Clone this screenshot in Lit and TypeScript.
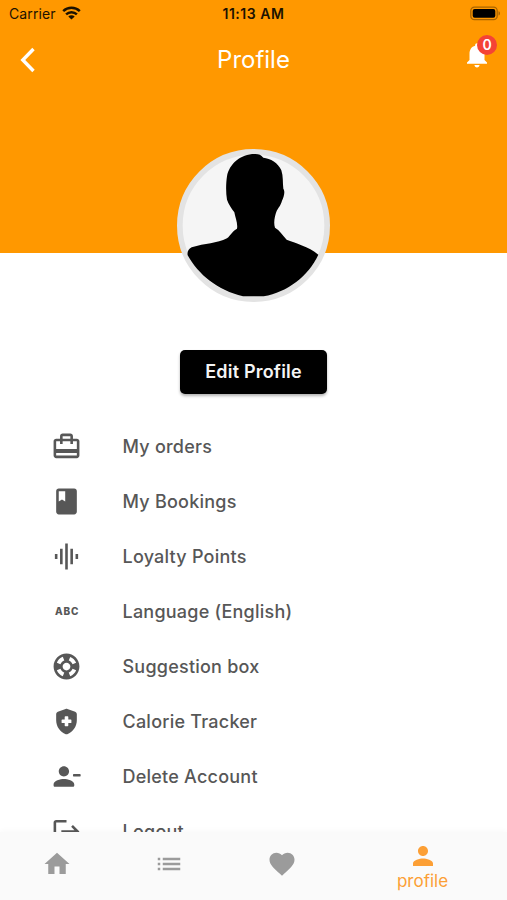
import { LitElement, html, css, svg } from "lit";
import { customElement, property } from "lit/decorators.js";

const ICONS: Record<string, string> = {
  orders:
    "M20 6h-3V4c0-1.11-.89-2-2-2H9c-1.11 0-2 .89-2 2v2H4c-1.11 0-2 .89-2 2v11c0 1.11.89 2 2 2h16c1.11 0 2-.89 2-2V8c0-1.11-.89-2-2-2zM9 4h6v2H9V4zm11 15H4v-2h16v2zm0-5H4V8h3v2h2V8h6v2h2V8h3v6z",
  bookings:
    "M18 2H6c-1.1 0-2 .9-2 2v16c0 1.1.9 2 2 2h12c1.1 0 2-.9 2-2V4c0-1.1-.9-2-2-2zM6 4h5v8l-2.5-1.5L6 12V4z",
  points:
    "M7 18h2V6H7v12zm4 4h2V2h-2v20zm-8-8h2v-4H3v4zm12 4h2V6h-2v12zm4-8v4h2v-4h-2z",
  support:
    "M12 2C6.48 2 2 6.48 2 12s4.48 10 10 10 10-4.48 10-10S17.52 2 12 2zm7.46 7.12l-2.78 1.15c-.51-1.36-1.58-2.44-2.95-2.94l1.15-2.78c2.1.8 3.77 2.47 4.58 4.57zM12 15c-1.66 0-3-1.34-3-3s1.34-3 3-3 3 1.34 3 3-1.34 3-3 3zM9.13 4.54l1.17 2.78c-1.38.5-2.47 1.59-2.98 2.97L4.54 9.13c.81-2.11 2.48-3.78 4.59-4.59zM4.54 14.87l2.78-1.15c.51 1.38 1.59 2.46 2.97 2.96l-1.17 2.78c-2.1-.81-3.77-2.48-4.58-4.59zm10.34 4.59l-1.15-2.78c1.37-.51 2.45-1.59 2.95-2.97l2.78 1.17c-.81 2.1-2.48 3.77-4.58 4.58z",
  health:
    "M11.3 2.26l-6 2.25C4.52 4.81 4 5.55 4 6.39v4.7c0 4.83 3.13 9.37 7.43 10.75.37.12.77.12 1.14 0 4.3-1.38 7.43-5.91 7.43-10.75v-4.7c0-.83-.52-1.58-1.3-1.87l-6-2.25c-.45-.18-.95-.18-1.4-.01zM15.3 13.2h-1.9v1.9c0 .3-.2.5-.5.5h-1.8c-.3 0-.5-.2-.5-.5v-1.9H8.7c-.3 0-.5-.2-.5-.5v-1.8c0-.3.2-.5.5-.5h1.9V8.5c0-.3.2-.5.5-.5h1.8c.3 0 .5.2.5.5v1.9h1.9c.3 0 .5.2.5.5v1.8c0 .3-.2.5-.5.5z",
  remove:
    "M14 8c0-2.21-1.79-4-4-4S6 5.79 6 8s1.79 4 4 4 4-1.79 4-4zM2 18v1c0 .55.45 1 1 1h14c.55 0 1-.45 1-1v-1c0-2.66-5.33-4-8-4s-8 1.34-8 4zM17.6 10h4.8c.35 0 .6.45.6 1s-.25 1-.6 1h-4.8c-.35 0-.6-.45-.6-1s.25-1 .6-1z",
  logout:
    "M17 7l-1.41 1.41L18.17 11H8v2h10.17l-2.58 2.58L17 17l5-5zM4 5h8V3H4c-1.1 0-2 .9-2 2v14c0 1.1.9 2 2 2h8v-2H4V5z",
  home: "M10 20v-6h4v6h5v-8h3L12 3 2 12h3v8z",
  list: "M3 13h2v-2H3v2zm0 4h2v-2H3v2zm0-8h2V7H3v2zm4 4h14v-2H7v2zm0 4h14v-2H7v2zM7 7v2h14V7H7z",
  heart:
    "M12 21.35l-1.45-1.32C5.4 15.36 2 12.28 2 8.5 2 5.42 4.42 3 7.5 3c1.74 0 3.41.81 4.5 2.09C13.09 3.81 14.76 3 16.5 3 19.58 3 22 5.42 22 8.5c0 3.78-3.4 6.86-8.55 11.54L12 21.35z",
  person:
    "M12 12c2.21 0 4-1.79 4-4s-1.79-4-4-4-4 1.79-4 4 1.79 4 4 4zm0 2c-2.67 0-8 1.34-8 4v2h16v-2c0-2.66-5.33-4-8-4z",
  bell: "M12 22c1.1 0 2-.9 2-2h-4c0 1.1.89 2 2 2zm6-6v-5c0-3.07-1.64-5.64-4.5-6.32V4c0-.83-.67-1.5-1.5-1.5s-1.5.67-1.5 1.5v.68C7.63 5.36 6 7.92 6 11v5l-2 2v1h16v-1l-2-2z",
};

@customElement("ui-icon")
class UiIcon extends LitElement {
  @property() name = "";
  static styles = css`
    :host {
      display: block;
      flex: none;
    }
    svg {
      display: block;
      width: 100%;
      height: 100%;
      fill: currentColor;
    }
  `;
  render() {
    return html`<svg viewBox="0 0 24 24">${svg`<path fill-rule="evenodd" d=${ICONS[this.name]}></path>`}</svg>`;
  }
}

@customElement("menu-row")
class MenuRow extends LitElement {
  @property() icon = "";
  @property() label = "";
  static styles = css`
    :host {
      display: flex;
      align-items: center;
      height: 55px;
      padding-left: 51.2px;
      color: #575757;
    }
    .icon {
      width: 31px;
      height: 31px;
      flex: none;
    }
    .abc {
      display: flex;
      align-items: center;
      justify-content: center;
      font: 800 10px/31px Inter, "Liberation Sans", sans-serif;
      letter-spacing: 0.9px;
      text-indent: 1px;
    }
    .label {
      margin-left: 40.3px;
      font: 500 18px/24px Inter, "Liberation Sans", sans-serif;
      letter-spacing: 0.23px;
      white-space: nowrap;
    }
  `;
  render() {
    return html`${this.icon === "abc"
        ? html`<span class="icon abc">ABC</span>`
        : html`<ui-icon class="icon" name=${this.icon}></ui-icon>`}
      <span class="label">${this.label}</span>`;
  }
}

const ROWS = [
  ["orders", "My orders"],
  ["bookings", "My Bookings"],
  ["points", "Loyalty Points"],
  ["abc", "Language (English)"],
  ["support", "Suggestion box"],
  ["health", "Calorie Tracker"],
  ["remove", "Delete Account"],
  ["logout", "Logout"],
];

@customElement("app-root")
class AppRoot extends LitElement {
  static styles = css`
    :host {
      display: flex;
      flex-direction: column;
      height: 900px;
      overflow: hidden;
      background: #fff;
      font-family: Inter, "Liberation Sans", sans-serif;
    }
    .header {
      flex: none;
      height: 252.5px;
      background: #ff9800;
    }
    .status {
      display: grid;
      grid-template-columns: 1fr auto 1fr;
      align-items: center;
      height: 27px;
      padding: 0 6px 0 9px;
      color: #1c1200;
    }
    .carrier {
      display: flex;
      align-items: center;
      gap: 6px;
      font-size: 14px;
      letter-spacing: 0.1px;
    }
    .wifi {
      width: 19px;
      height: 14px;
      margin-top: -2px;
    }
    .time {
      font-size: 14px;
      font-weight: 600;
      letter-spacing: 0.55px;
      margin-left: -3px;
    }
    .battery {
      justify-self: end;
      width: 31px;
      height: 15px;
    }
    .bar {
      display: grid;
      grid-template-columns: 1fr auto 1fr;
      align-items: center;
      height: 65px;
      padding: 0 15px 0 20px;
      color: #fff;
    }
    .back {
      width: 16px;
      height: 26px;
    }
    .title {
      font-size: 24px;
      line-height: 30px;
      margin-left: -5px;
    }
    .alerts {
      position: relative;
      justify-self: end;
      width: 30px;
      height: 30px;
      margin-top: -9px;
    }
    .alerts ui-icon {
      width: 30px;
      height: 30px;
    }
    .badge {
      position: absolute;
      left: 15px;
      top: -5px;
      width: 20px;
      height: 20px;
      border-radius: 50%;
      background: #f44336;
      font-size: 14px;
      font-weight: 600;
      line-height: 20px;
      text-align: center;
    }
    .avatar {
      flex: none;
      align-self: center;
      width: 153px;
      height: 153px;
      margin-top: -104px;
    }
    svg {
      display: block;
    }
    .edit {
      flex: none;
      align-self: center;
      width: 147px;
      height: 44px;
      margin: 48.5px 0 25px;
      padding: 0;
      border: 0;
      border-radius: 5px;
      background: #000;
      box-shadow: 0 2px 3px rgba(0, 0, 0, 0.3);
      color: #f4f4f4;
      font: 600 18px/44px Inter, "Liberation Sans", sans-serif;
      letter-spacing: 0.2px;
    }
    .menu {
      flex: 1;
      min-height: 0;
      overflow: hidden;
    }
    .nav {
      flex: none;
      display: grid;
      grid-template-columns: 2fr 2fr 2fr 3fr;
      height: 68.5px;
      background: #fafafa;
      box-shadow: 0 -1px 6px rgba(0, 0, 0, 0.03);
      color: #9b9b9b;
    }
    .tab {
      display: flex;
      flex-direction: column;
      align-items: center;
      padding-top: 17.5px;
    }
    .tab ui-icon {
      width: 30px;
      height: 30px;
      margin-left: 1px;
    }
    .active {
      padding-top: 9px;
      color: #fc9f35;
      font-size: 17px;
      line-height: 20px;
    }
  `;

  render() {
    return html`
      <div class="header">
        <div class="status">
          <div class="carrier">
            <span>Carrier</span>
            <svg class="wifi" viewBox="0 0 19 14" fill="none" stroke="#1c1200" stroke-width="2.5">
              <path d="M1.2 5.2a12 12 0 0 1 16.6 0"></path>
              <path d="M4.1 8.4a7.8 7.8 0 0 1 10.8 0"></path>
              <path d="M9.5 13.6L6.3 10.5a4.6 4.6 0 0 1 6.4 0z" fill="#1c1200" stroke="none"></path>
            </svg>
          </div>
          <div class="time">11:13 AM</div>
          <svg class="battery" viewBox="0 0 31 15">
            <rect x="0.8" y="1.1" width="26.4" height="12.6" rx="3.6" fill="none" stroke="#a86400" stroke-width="1.3"></rect>
            <rect x="2.7" y="3" width="22.6" height="8.8" rx="2" fill="#000"></rect>
            <path d="M28.5 5.3c2 .5 2 3.7 0 4.2z" fill="#a86400"></path>
          </svg>
        </div>
        <div class="bar">
          <svg class="back" viewBox="0 0 16 26" fill="none" stroke="#fff" stroke-width="3.4">
            <path d="M13.5 2L2.8 13l10.7 11"></path>
          </svg>
          <div class="title">Profile</div>
          <div class="alerts">
            <ui-icon name="bell"></ui-icon>
            <span class="badge">0</span>
          </div>
        </div>
      </div>
      <svg class="avatar" viewBox="38 26 459 459">
        <circle cx="267.5" cy="255.5" r="221" fill="#f5f5f5" stroke="#e3e3e3" stroke-width="17"></circle>
        <path
          d="M273 41C284 41 290 44 297 52C318 54 342 68 351 90C357 108 355 128 357 145C363 153 359 170 353 181C349 196 341 203 337 212C331 228 327 248 332 262C346 270 354 283 367 298C392 308 433 318 462 343C432 407 370 455 298 468L236 468C160 450 102 403 70 345C68 335 72 326 82 321C122 309 158 309 188 294C200 284 204 272 218 265C221 250 213 232 210 216C202 206 192 190 188 178C184 155 185 128 188 108C195 70 230 40 273 41z"
        ></path>
      </svg>
      <button class="edit">Edit Profile</button>
      <div class="menu">
        ${ROWS.map(([icon, label]) => html`<menu-row icon=${icon} label=${label}></menu-row>`)}
      </div>
      <div class="nav">
        <div class="tab"><ui-icon name="home"></ui-icon></div>
        <div class="tab"><ui-icon name="list"></ui-icon></div>
        <div class="tab"><ui-icon name="heart"></ui-icon></div>
        <div class="tab active"><ui-icon name="person"></ui-icon><span>profile</span></div>
      </div>
    `;
  }
}
